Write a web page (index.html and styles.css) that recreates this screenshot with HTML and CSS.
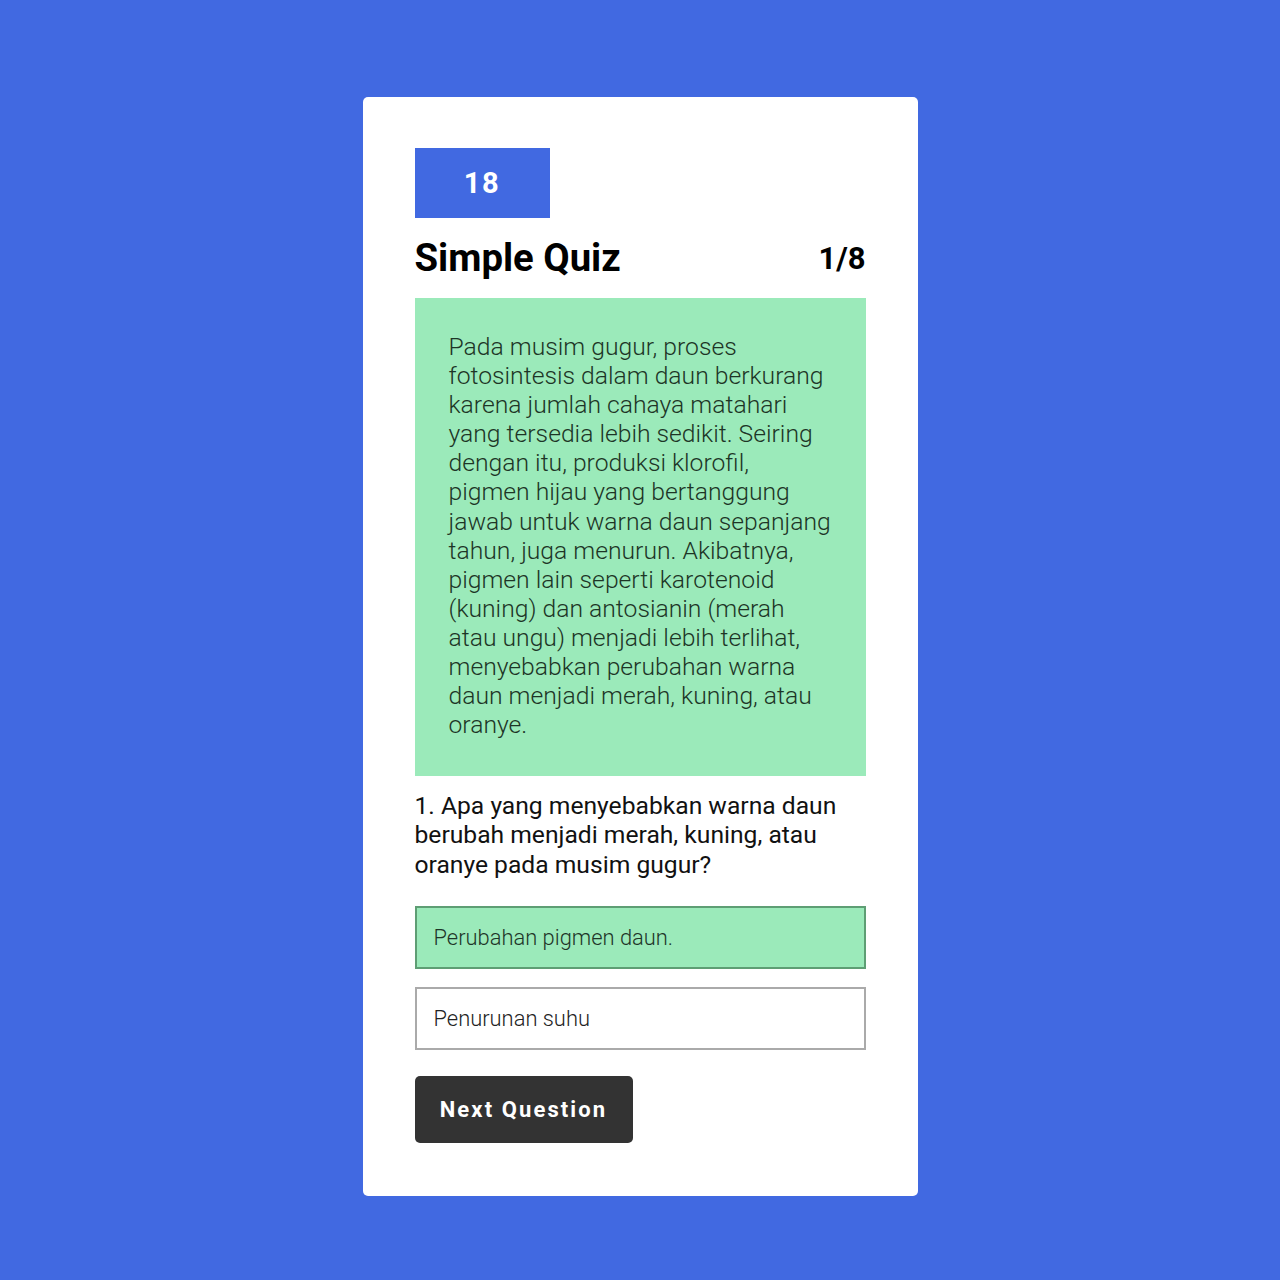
FILE: index.html
```html
<!DOCTYPE html>
<html lang="id">
<head>
<meta charset="utf-8">
<title>Simple Quiz</title>
<link rel="stylesheet" href="styles.css">
</head>
<body>
<main class="card">
  <div class="timer">18</div>
  <header class="quiz-header">
    <h1 class="title">Simple Quiz</h1>
    <span class="progress">1/8</span>
  </header>
  <section class="passage">
    <p>Pada musim gugur, proses fotosintesis dalam daun berkurang karena jumlah cahaya matahari yang tersedia lebih sedikit. Seiring dengan itu, produksi klorofil, pigmen hijau yang bertanggung jawab untuk warna daun sepanjang tahun, juga menurun. Akibatnya, pigmen lain seperti karotenoid (kuning) dan antosianin (merah atau ungu) menjadi lebih terlihat, menyebabkan perubahan warna daun menjadi merah, kuning, atau oranye.</p>
  </section>
  <p class="question">1. Apa yang menyebabkan warna daun berubah menjadi merah, kuning, atau oranye pada musim gugur?</p>
  <div class="options">
    <div class="option option-correct">Perubahan pigmen daun.</div>
    <div class="option">Penurunan suhu</div>
  </div>
  <button class="next-btn" type="button">Next Question</button>
</main>
</body>
</html>
```

FILE: styles.css
```css
* { box-sizing: border-box; }

html, body {
  margin: 0;
  padding: 0;
}

body {
  background: #4169e1;
  font-family: Roboto, "Noto Sans", sans-serif;
  min-height: 1280px;
  display: flex;
  justify-content: center;
  align-items: flex-start;
  padding-top: 97px;
}

.card {
  width: 555px;
  background: #fff;
  border-radius: 5px;
  padding: 51px 52px 53px;
  display: flex;
  flex-direction: column;
}

.timer {
  width: 135px;
  height: 70px;
  background: #4169e1;
  color: #fff;
  font-weight: 700;
  font-size: 29px;
  letter-spacing: 1.5px;
  display: flex;
  align-items: center;
  justify-content: center;
}

.quiz-header {
  display: flex;
  justify-content: space-between;
  align-items: center;
  margin-top: 17px;
  height: 46px;
}

.title {
  margin: 0;
  font-size: 38.3px;
  font-weight: 700;
  color: #000;
  line-height: 46px;
}

.progress {
  font-size: 31px;
  font-weight: 700;
  color: #000;
}

.passage {
  margin-top: 17px;
  background: #9beaba;
  padding: 34px 34px 37px 34px;
}

.passage p {
  margin: 0;
  font-size: 24.7px;
  font-weight: 300;
  line-height: 29.1px;
  color: #1d3526;
}

.question {
  margin: 15px 0 0;
  font-size: 24.65px;
  font-weight: 400;
  line-height: 29.1px;
  color: #111;
}

.options {
  margin-top: 27px;
  display: flex;
  flex-direction: column;
  gap: 18px;
}

.option {
  height: 63px;
  border: 2px solid #aaaaaa;
  padding: 0 17px;
  display: flex;
  align-items: center;
  font-size: 21.9px;
  font-weight: 300;
  color: #222;
}

.option-correct {
  background: #9beaba;
  border-color: #5e9e74;
  color: #1e3528;
}

.next-btn {
  align-self: flex-start;
  margin-top: 26px;
  width: 218px;
  height: 67px;
  background: #333;
  color: #fff;
  border: none;
  border-radius: 5px;
  font-family: Roboto, "Noto Sans", sans-serif;
  font-size: 22px;
  font-weight: 700;
  letter-spacing: 2.1px;
  padding: 0;
}
```
